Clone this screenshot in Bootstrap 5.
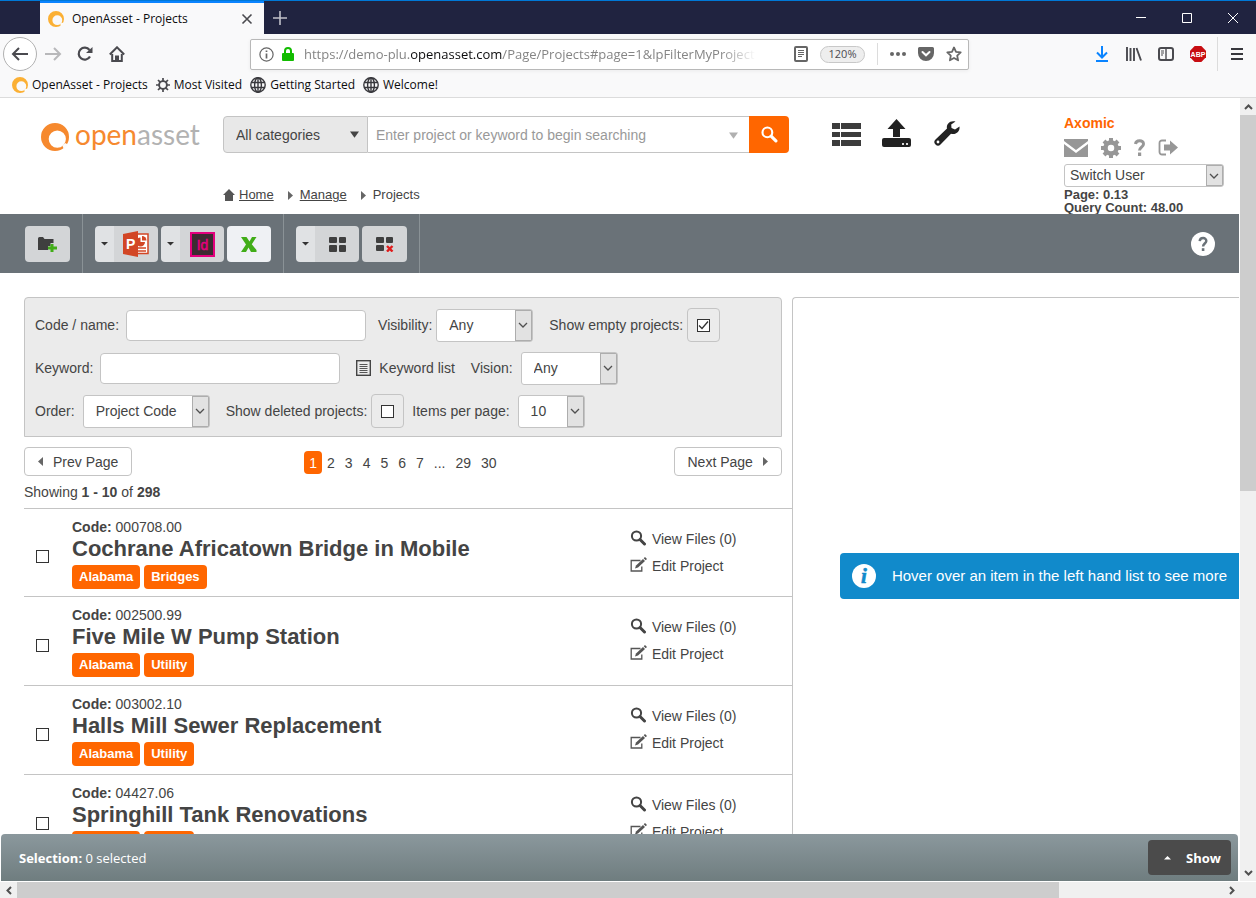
<!DOCTYPE html>
<html lang="en">
<head>
<meta charset="utf-8">
<meta name="viewport" content="width=device-width, initial-scale=1">
<title>OpenAsset - Projects</title>
<link rel="stylesheet" href="https://cdn.jsdelivr.net/npm/bootstrap@5.3.0/dist/css/bootstrap.min.css">
<style>
  :root { --line: #c4c4c4; --ink: #444; --brand: #ff6600; }
  body { font: 14px/18px "Liberation Sans", Arial, sans-serif; color: var(--ink); background: #fff; }
  svg { display: block; flex: none; }
  button { color: inherit; }
  .ui-font { font-family: "Open Sans", "Noto Sans", sans-serif; font-size: 12px; line-height: 16px; color: #0c0c0d; }
  .bare { border: 0; background: none; padding: 0; display: flex; align-items: center; justify-content: center; }

  /* browser window */
  .tabstrip { height: 34px; background: #202340; border-top: 1px solid #0078d7; padding-left: 40px; }
  .browser-tab { width: 224px; background: #f9f9fa; border-top: 2px solid #0a84ff; padding: 0 10px 0 8px; }
  .win-btn { width: 46px; }
  .navrow { height: 40px; background: #f9f9fa; padding: 0 3px; color: #4a4a4f; }
  .nav-ico { width: 32px; height: 32px; }
  .nav-back { border: 1px solid #b1b1b1; border-radius: 50%; width: 34px; height: 34px; background: #fff; }
  .urlbar { margin-left: 117px; width: 719px; height: 31px; border: 1px solid #b8b8b8; border-radius: 2px; background: #fff; padding: 0 6px 0 8px; box-shadow: 0 1px 4px rgba(0,0,0,.06); }
  .url-text { font-size: 13px; line-height: 20px; margin-left: 10px; max-width: 452px; color: #858585; white-space: nowrap; overflow: hidden; -webkit-mask-image: linear-gradient(to right, #000 92%, transparent); mask-image: linear-gradient(to right, #000 92%, transparent); }
  .url-text b { font-weight: 400; color: #0c0c0d; }
  .zoom-pill { border: 1px solid #c8c8c8; border-radius: 9px; background: #eee; width: 45px; height: 17px; font-size: 11px; line-height: 14px; text-align: center; padding: 0; margin: 0 12px; }
  .v-rule { width: 1px; height: 22px; background: #dcdcdc; }
  .v-rule-tall { height: 34px; margin: 0 3px; }
  .bookmarks { height: 24px; background: #f9f9fa; border-bottom: 1px solid #dcdcdc; padding: 0 12px 2px; }
  .bookmarks a { color: #0c0c0d; text-decoration: none; }

  /* scrollbars */
  .vbar { width: 16px; background: #f0f0f0; margin-left: 1px; }
  .hbar { height: 16px; background: #f0f0f0; margin-top: 1px; }
  .thumb { background: #cdcdcd; }
  .vbar .thumb { height: 48%; }
  .hbar .thumb { width: 83%; }
  .sb-btn { width: 17px; height: 17px; color: #505050; }

  /* site header */
  .site-head { height: 116px; padding: 17px 15px 0 41px; }
  .wordmark { font: 28px/30px Lato, sans-serif; color: #b2b2b2; text-decoration: none; width: 182px; gap: 6px; }
  .wordmark span { color: #f6892e; }
  .finder { height: 37px; margin-top: 1px; }
  .finder-cat { width: 145px; border: 1px solid var(--line); border-radius: 4px 0 0 4px; padding: 0 12px; color: var(--ink); appearance: none;
    background: #e8e8e8 url("data:image/svg+xml,%3Csvg xmlns='http://www.w3.org/2000/svg' viewBox='0 0 10 8'%3E%3Cpath d='M0 0h10L5 7z' fill='%23444'/%3E%3C/svg%3E") no-repeat right 8px top 14px / 9px 8px; }
  .finder-box { width: 381px; border: 1px solid var(--line); border-left: 0; border-right: 0; padding: 0 8px; color: var(--ink);
    background: #fff url("data:image/svg+xml,%3Csvg xmlns='http://www.w3.org/2000/svg' viewBox='0 0 10 8'%3E%3Cpath d='M0 0h10L5 7z' fill='%23b0b0b0'/%3E%3C/svg%3E") no-repeat right 11px top 15px / 9px 8px; }
  .finder-box::placeholder { color: #999; }
  .finder-go { width: 40px; background: var(--brand); border-radius: 0 4px 4px 0; }
  .crumbs { margin-top: 33px; font-size: 13px; }
  .crumbs a { color: var(--ink); }
  .crumb-sep { margin: 0 7px 0 14px; }
  .main-icons { margin: 4px 0 0 43px; gap: 21px; }
  .who { width: 160px; font-weight: 700; font-size: 13px; line-height: 13px; }
  .who-name { color: var(--brand); text-decoration: none; font-size: 14px; line-height: 16px; }
  .who-icons { height: 33px; gap: 13px; }

  /* native looking drop-downs */
  .pick { appearance: none; height: 33px; border: 1px solid var(--line); border-radius: 3px; color: var(--ink); padding: 0 0 0 12px;
    background: url("data:image/svg+xml,%3Csvg xmlns='http://www.w3.org/2000/svg' viewBox='0 0 10 6'%3E%3Cpath d='M1 1l4 4 4-4' fill='none' stroke='%23505050' stroke-width='1.3'/%3E%3C/svg%3E") no-repeat right 4px center / 10px 6px,
      linear-gradient(#e2e2e2, #e2e2e2) no-repeat right 1px center / 15px calc(100% - 2px),
      linear-gradient(#adadad, #adadad) no-repeat right 0 center / 17px 100%, #fff; }
  .pick-sm { height: 23px; padding-left: 5px; width: 160px; font-size: 14px; font-weight: 400; margin-bottom: 1px; }

  /* grey action bar */
  .actionbar { height: 59px; background: #6a7278; padding: 0 24px 0 25px; }
  .group { padding: 12px 12px 0; border-right: 1px solid #8a9296; gap: 3px; }
  .group:first-child { padding-left: 0; }
  .tool { height: 36px; width: 45px; border-radius: 4px; background: #d3d5d7; }
  .tool-menu { width: 19px; background: #e0e2e4; border-radius: 4px 0 0 4px; }
  .tool-menu + .tool { border-radius: 0 4px 4px 0; width: 44px; }
  .tool-lit { width: 44px; background: #eff1f4; }

  /* filters */
  .workspace { padding-left: 24px; padding-top: 24px; }
  .left-col { flex: 0 0 63.2%; }
  .filters { background: #ebebeb; border: 1px solid var(--line); border-radius: 4px 4px 0 0; padding: 10px 10px 8px; margin-right: 10px; }
  .filter-row { height: 34px; display: flex; align-items: center; }
  .filter-row + .filter-row { margin-top: 9px; }
  .entry { width: 240px; height: 31px; border: 1px solid var(--line); border-radius: 4px; background: #fff; margin-left: 7px; }
  .boxed { border: 1px solid var(--line); border-radius: 4px; height: 34px; width: 33px; display: flex; align-items: center; justify-content: center; }
  .tick { appearance: none; width: 13px; height: 13px; border: 1px solid #333; background: #fff; margin: 0; flex: none; }
  .tick:checked { background: #fff url("data:image/svg+xml,%3Csvg xmlns='http://www.w3.org/2000/svg' viewBox='0 0 11 11'%3E%3Cpath d='M1 5.5l3 3 6-7' fill='none' stroke='%23333' stroke-width='1.3'/%3E%3C/svg%3E"); }
  .w-any { width: 97px; }
  .w-order { width: 127px; }
  .w-items { width: 67px; }

  /* pager and results */
  .pager-row { margin: 10px 10px 0 0; }
  .page-btn { height: 29px; border: 1px solid var(--line); border-radius: 4px; background: #fff; padding: 0 13px; display: flex; align-items: center; gap: 10px; }
  .pages { padding-top: 2px; }
  .pages a { color: var(--ink); text-decoration: none; padding: 3px 5px 2px; line-height: 18px; border-radius: 4px; }
  .pages a.now { background: var(--brand); color: #fff; }
  .tally { margin: 7px 0; }
  .result { height: 89px; border-bottom: 1px solid var(--line); }
  .result:first-child { border-top: 1px solid var(--line); }
  .result-pick { width: 48px; padding: 8px 0 0 12px; }
  .result-text { padding-top: 9px; }
  .result-title { font-size: 22px; line-height: 26px; font-weight: 700; margin: 0 0 3px; }
  .tagbox { background: var(--brand); color: #fff; font-weight: 700; font-size: 13px; line-height: 24px; padding: 0 7px; border-radius: 4px; text-decoration: none; }
  .acts { width: 162px; padding-top: 21px; gap: 9px; }
  .acts a { color: var(--ink); text-decoration: none; display: flex; gap: 5px; }
  .preview { border-left: 1px solid var(--line); border-top: 1px solid var(--line); border-top-left-radius: 4px; padding: 255px 0 0 47px; overflow: hidden; }
  .hint { background: #118acb; color: #fff; border-radius: 4px 0 0 4px; height: 46px; font-size: 15px; padding-left: 12px; gap: 16px; white-space: nowrap; }

  /* selection drawer */
  .drawer { height: 47px; margin: 0 1px; border-radius: 4px 4px 0 0; background: linear-gradient(#8b989d, #6f7d7f); font-size: 13px; padding: 0 7px 0 18px; }
  .show-btn { background: #4b4b4b; border-radius: 4px; width: 83px; height: 35px; padding-left: 6px; font-weight: 700; color: #fff; gap: 15px; }
</style>
</head>
<body>
<svg width="0" height="0" class="position-absolute">
  <symbol id="ring" viewBox="0 0 28 28"><path fill-rule="evenodd" d="M14 0a14 14 0 1 0 0 28 14 14 0 0 0 0-28zM16.300 7.500a8.600 8.600 0 1 1 0 17.200 8.600 8.600 0 0 1 0-17.200z"/><path d="M21.500 23l1.500 3.500 4-5-3-1.500z" fill="#fcfcfc"/></symbol>
  <symbol id="globe" viewBox="0 0 16 16"><g fill="none" stroke="#38383d" stroke-width="1.400"><circle cx="8" cy="8" r="7.200"/><ellipse cx="8" cy="8" rx="3.400" ry="7.200"/><path d="M1 5.500h14M1 10.500h14M8 1v14"/></g></symbol>
  <symbol id="lens" viewBox="0 0 16 16"><circle cx="6" cy="6" r="4.600" fill="none" stroke="currentColor" stroke-width="2"/><path d="M9.500 9.500l4.500 4.500" stroke="currentColor" stroke-width="3" stroke-linecap="round"/></symbol>
  <symbol id="pen" viewBox="0 0 17 16"><path d="M10.500 3.500H1.200v10.500h10.600V9.500" fill="none" stroke="#555" stroke-width="1.300"/><path d="M5 11.500l1-3L13 2l2 2-7 6.500z" fill="#555"/><path d="M13.700 1.300L15 0l2 2-1.300 1.300z" fill="#555"/></symbol>
  <symbol id="caret" viewBox="0 0 7 4"><path d="M0 0h7L3.500 3.500z" fill="#333"/></symbol>
  <symbol id="tri" viewBox="0 0 5 9"><path d="M0 0l5 4.500L0 9z" fill="#666"/></symbol>
</svg>

<div class="vh-100 d-flex flex-column overflow-hidden">

  <!-- browser chrome -->
  <div class="tabstrip ui-font d-flex flex-shrink-0">
    <div class="browser-tab d-flex align-items-center">
      <svg width="16" height="16" fill="#fbb034"><use href="#ring"/></svg>
      <span class="ms-2 flex-fill">OpenAsset - Projects</span>
      <button class="bare" aria-label="Close tab"><svg width="14" height="14" viewBox="0 0 14 14"><path d="M2.500 2.500l9 9m0-9l-9 9" stroke="#4a4a4f" stroke-width="1.600"/></svg></button>
    </div>
    <button class="bare ms-2" aria-label="New tab"><svg width="16" height="16" viewBox="0 0 16 16"><path d="M8 1v14M1 8h14" stroke="#c0c0c8" stroke-width="1.600"/></svg></button>
    <div class="ms-auto d-flex">
      <button class="bare win-btn" aria-label="Minimize"><svg width="10" height="10" viewBox="0 0 10 10"><path d="M0 4.500h10" stroke="#fff"/></svg></button>
      <button class="bare win-btn" aria-label="Maximize"><svg width="10" height="10" viewBox="0 0 10 10"><path d="M.5.5h9v9h-9z" fill="none" stroke="#fff"/></svg></button>
      <button class="bare win-btn" aria-label="Close"><svg width="10" height="10" viewBox="0 0 10 10"><path d="M0 0l10 10M10 0L0 10" stroke="#fff"/></svg></button>
    </div>
  </div>

  <div class="navrow ui-font d-flex align-items-center flex-shrink-0">
    <button class="bare nav-back" aria-label="Back"><svg width="18" height="16" viewBox="0 0 18 16"><path d="M8 2L2 8l6 6M2 8h15" fill="none" stroke="#4a4a4f" stroke-width="2"/></svg></button>
    <button class="bare nav-ico" aria-label="Forward"><svg width="18" height="16" viewBox="0 0 18 16"><path d="M10 2l6 6-6 6M16 8H1" fill="none" stroke="#b8b8ba" stroke-width="2"/></svg></button>
    <button class="bare nav-ico" aria-label="Reload"><svg width="16" height="16" viewBox="0 0 16 16"><path d="M13 10.500A6 6 0 1 1 12.500 4" fill="none" stroke="#4a4a4f" stroke-width="2.200"/><path d="M15.500 1v6H9z" fill="#4a4a4f"/></svg></button>
    <button class="bare nav-ico" aria-label="Home"><svg width="16" height="16" viewBox="0 0 16 16"><path d="M.8 8.500L8 1.300l7.200 7.200" fill="none" stroke="#4a4a4f" stroke-width="2"/><path d="M3.200 8v7h9.600V8" fill="none" stroke="#4a4a4f" stroke-width="2"/><path d="M6 15V9.500h4V15z" fill="#4a4a4f"/></svg></button>
    <div class="urlbar d-flex align-items-center">
      <svg width="15" height="15" viewBox="0 0 15 15"><circle cx="7.500" cy="7.500" r="6.600" fill="none" stroke="#666" stroke-width="1.200"/><path d="M7.500 6.500v5M7.500 3.500v1.600" stroke="#666" stroke-width="1.700"/></svg>
      <svg class="ms-2" width="12" height="14" viewBox="0 0 12 14"><path d="M3 7V4a3 3 0 0 1 6 0v3" fill="none" stroke="#12bc00" stroke-width="2"/><rect y="6" width="12" height="8" rx="1" fill="#12bc00"/></svg>
      <div class="url-text flex-fill" role="textbox" contenteditable="true" aria-label="Address">https://demo-plu.<b>openasset.com</b>/Page/Projects#page=1&amp;lpFilterMyProject</div>
      <button class="bare ms-auto" aria-label="Reader view"><svg width="14" height="16" viewBox="0 0 14 16"><rect x="1" y="1" width="12" height="14" rx="1" fill="none" stroke="#666" stroke-width="2"/><path d="M4 4.500h6M4 6.500h6M4 8.500h6M4 10.500h4" stroke="#666"/></svg></button>
      <button class="zoom-pill">120%</button>
      <span class="v-rule me-2"></span>
      <button class="bare px-1" aria-label="Page actions"><svg width="16" height="4" viewBox="0 0 16 4"><g fill="#666"><circle cx="2" cy="2" r="2"/><circle cx="8" cy="2" r="2"/><circle cx="14" cy="2" r="2"/></g></svg></button>
      <button class="bare ms-2" aria-label="Pocket"><svg width="16" height="14" viewBox="0 0 16 14"><path d="M1.500 0h13A1.500 1.500 0 0 1 16 1.500V6A8 8 0 0 1 0 6V1.500A1.500 1.500 0 0 1 1.500 0z" fill="#666"/><path d="M4.500 5L8 8.300 11.500 5" fill="none" stroke="#fff" stroke-width="2" stroke-linecap="round"/></svg></button>
      <button class="bare ms-2 ps-1" aria-label="Bookmark"><svg width="16" height="16" viewBox="0 0 16 16"><path d="M8 1.500l2 4.300 4.700.6-3.500 3.200.9 4.700L8 12l-4.100 2.300.9-4.700L1.300 6.400 6 5.800z" fill="none" stroke="#666" stroke-width="1.800" stroke-linejoin="round"/></svg></button>
    </div>
    <div class="ms-auto d-flex align-items-center">
      <button class="bare nav-ico" aria-label="Downloads"><svg width="12" height="16" viewBox="0 0 12 16"><path d="M6 0v11M1 6.500l5 5 5-5M0 15h12" fill="none" stroke="#0a84ff" stroke-width="2"/></svg></button>
      <button class="bare nav-ico" aria-label="Library"><svg width="16" height="14" viewBox="0 0 16 14"><path d="M1 0v14M4.500 1v13M8 1v13M10.500 1L15 13.500" stroke="#4a4a4f" stroke-width="1.900"/></svg></button>
      <button class="bare nav-ico" aria-label="Sidebars"><svg width="16" height="14" viewBox="0 0 16 14"><rect x="1" y="1" width="14" height="12" rx="2" fill="none" stroke="#4a4a4f" stroke-width="2"/><path d="M8 1v12" stroke="#4a4a4f" stroke-width="1.400"/><path d="M3 4h3M3 6h3M3 8h2" stroke="#4a4a4f"/></svg></button>
      <button class="bare nav-ico" aria-label="Adblock Plus"><svg width="16" height="16" viewBox="0 0 16 16"><path d="M4.700 0h6.600L16 4.700v6.600L11.300 16H4.700L0 11.300V4.700z" fill="#c70d12"/><text x="8" y="10.500" font-family="Liberation Sans" font-size="7" font-weight="700" fill="#fff" text-anchor="middle">ABP</text></svg></button>
      <span class="v-rule v-rule-tall"></span>
      <button class="bare nav-ico" aria-label="Menu"><svg width="12" height="14" viewBox="0 0 12 14"><path d="M0 2h12M0 7h12M0 12h12" stroke="#38383d" stroke-width="1.800"/></svg></button>
    </div>
  </div>

  <div class="bookmarks ui-font d-flex align-items-center gap-2 flex-shrink-0">
    <a href="#" class="d-flex gap-1"><svg width="16" height="16" fill="#fbb034"><use href="#ring"/></svg>OpenAsset - Projects</a>
    <a href="#" class="d-flex gap-1"><svg width="14" height="16" viewBox="0 0 14 16"><circle cx="7" cy="8" r="3.900" fill="none" stroke="#4a4a4f" stroke-width="1.900"/><path d="M7 1v3M7 12v3M0 8h3M11 8h3M2 3l2.200 2.200M9.800 10.800L12 13M12 3L9.800 5.200M4.200 10.800L2 13" stroke="#4a4a4f" stroke-width="1.700"/></svg>Most Visited</a>
    <a href="#" class="d-flex gap-1"><svg width="16" height="16"><use href="#globe"/></svg>Getting Started</a>
    <a href="#" class="d-flex gap-1"><svg width="16" height="16"><use href="#globe"/></svg>Welcome!</a>
  </div>

  <!-- page and vertical scrollbar -->
  <div class="d-flex flex-fill overflow-hidden">
    <div class="flex-fill d-flex flex-column overflow-hidden">
      <div class="flex-fill overflow-hidden d-flex flex-column">

        <header class="site-head d-flex flex-shrink-0">
          <a href="#" class="wordmark d-flex mt-1"><svg width="28" height="28" fill="#f6892e" class="mt-1"><use href="#ring"/></svg><div><span>open</span>asset</div></a>
          <div>
            <form class="finder d-flex" onsubmit="return false">
              <select class="finder-cat" aria-label="Category"><option>All categories</option></select>
              <input class="finder-box" type="text" aria-label="Search" placeholder="Enter project or keyword to begin searching">
              <button class="finder-go bare text-white" aria-label="Search"><svg width="17" height="17"><use href="#lens"/></svg></button>
            </form>
            <nav class="crumbs d-flex align-items-center">
              <svg class="me-1" width="12" height="12" viewBox="0 0 12 12"><path d="M6 0l6 6h-2v6H2V6H0z" fill="#555"/></svg>
              <a href="#">Home</a>
              <svg class="crumb-sep" width="5" height="9"><use href="#tri"/></svg>
              <a href="#">Manage</a>
              <svg class="crumb-sep" width="5" height="9"><use href="#tri"/></svg>
              <span>Projects</span>
            </nav>
          </div>
          <div class="main-icons d-flex align-items-start">
            <button class="bare mt-1" aria-label="List"><svg width="29" height="23" viewBox="0 0 29 23"><path d="M0 0h8v6H0zM9 0h20v6H9zM0 9h8v5H0zM9 9h20v5H9zM0 17h8v6H0zM9 17h20v6H9z" fill="#3c3c3c"/></svg></button>
            <button class="bare" aria-label="Upload"><svg width="29" height="28" viewBox="0 0 29 28"><path d="M14.500 0l9 10h-5.500v8h-7v-8H5.500z" fill="#222"/><path d="M2 19h25a2 2 0 0 1 2 2v5a2 2 0 0 1-2 2H2a2 2 0 0 1-2-2v-5a2 2 0 0 1 2-2z" fill="#222"/><path d="M20 24h2v2h-2zM24 24h2v2h-2z" fill="#ddd"/></svg></button>
            <button class="bare" aria-label="Settings"><svg width="29" height="28" viewBox="-2 -2 29 28"><path d="M25.500 5.500l-4.500 3-3.500-1.500-.3-3.500L21.500.6c-5-1.600-9.500 2.200-8.500 7L1.500 18.500a3.400 3.400 0 0 0 5 5L17 12.800c4.800 1.200 9.300-2.300 8.500-7.300z" fill="#222"/><circle cx="4" cy="21" r="1.400" fill="#fff"/></svg></button>
          </div>
          <div class="who ms-auto">
            <a href="#" class="who-name d-block">Axomic</a>
            <div class="who-icons d-flex align-items-center">
              <svg width="24" height="18" viewBox="0 0 24 18"><path d="M0 0h24v2l-12 9L0 2zM0 5l12 9 12-9v13H0z" fill="#979797"/></svg>
              <svg width="20" height="20" viewBox="0 0 20 20"><circle cx="10" cy="10" r="5.500" fill="none" stroke="#979797" stroke-width="4.500"/><path d="M10 0v4M10 16v4M0 10h4M16 10h4M3 3l3 3M14 14l3 3M17 3l-3 3M6 14l-3 3" stroke="#979797" stroke-width="4"/></svg>
              <svg width="11" height="17" viewBox="0 0 11 17"><path d="M1.500 5C2 1 9.500.500 9.500 5c0 3-4 3.300-4 6.500" fill="none" stroke="#979797" stroke-width="3"/><path d="M4 13.500h3.200V17H4z" fill="#979797"/></svg>
              <svg width="20" height="17" viewBox="0 0 20 17"><path d="M8 1.500H4a2.500 2.500 0 0 0-2.500 2.500v9A2.500 2.500 0 0 0 4 15.500h4" fill="none" stroke="#979797" stroke-width="1.800"/><path d="M6 5.500h6v-4l8 7-8 7v-4H6z" fill="#979797"/></svg>
            </div>
            <select class="pick pick-sm d-block" aria-label="Switch User"><option>Switch User</option></select>
            <div>Page: 0.13</div><div>Query Count: 48.00</div>
          </div>
        </header>

        <div class="actionbar d-flex flex-shrink-0">
          <div class="group d-flex">
            <button class="bare tool" aria-label="New project"><svg width="20" height="15" viewBox="0 0 20 15"><path d="M0 1.500Q0 0 1.500 0H5l1.500 2h9v4h-3v3H10v4H0z" fill="#3f3f3f"/><path d="M12.500 7h3v2.500H19v3h-3.500V15h-3v-2.500H10v-3h2.500z" fill="#41ad18"/></svg></button>
          </div>
          <div class="group d-flex">
            <div class="d-flex"><button class="bare tool tool-menu" aria-label="PowerPoint options"><svg width="7" height="4"><use href="#caret"/></svg></button>
              <button class="bare tool" aria-label="PowerPoint"><svg width="26" height="26" viewBox="0 0 26 26"><path d="M13 3h12v19.500H13z" fill="#fff" stroke="#d24625" stroke-width="1.500"/><path d="M17.500 6.500V11H22a4.500 4.500 0 1 1-4.500-4.500z" fill="#d24625"/><path d="M19 5a4.500 4.500 0 0 1 4.500 4.500H19z" fill="#d24625"/><path d="M15 17h8M15 20h8" stroke="#d24625" stroke-width="1.500"/><path d="M0 3l15-3v26L0 23z" fill="#d24625"/><text x="3" y="18" font-family="Liberation Sans" font-size="14" font-weight="700" fill="#fff">P</text></svg></button></div>
            <div class="d-flex"><button class="bare tool tool-menu" aria-label="InDesign options"><svg width="7" height="4"><use href="#caret"/></svg></button>
              <button class="bare tool" aria-label="InDesign"><svg width="25" height="25" viewBox="0 0 25 25"><rect x="1" y="1" width="23" height="23" fill="#3c2b31" stroke="#e3007d" stroke-width="2"/><text x="12.500" y="17.500" font-family="Liberation Sans" font-size="14" fill="#e3007d" stroke="#e3007d" stroke-width=".5" text-anchor="middle">Id</text></svg></button></div>
            <button class="bare tool tool-lit" aria-label="Excel"><svg width="16" height="15" viewBox="0 0 16 15"><path d="M0 0h5.500l3 4.500L11 0h4.500l-4.700 7.200L15.500 13V15H10L7.500 10.500 5 15H0l5-7.500z" fill="#41ad18"/></svg></button>
          </div>
          <div class="group d-flex">
            <div class="d-flex"><button class="bare tool tool-menu" aria-label="Grid options"><svg width="7" height="4"><use href="#caret"/></svg></button>
              <button class="bare tool" aria-label="Select all"><svg width="17" height="15" viewBox="0 0 17 15"><g fill="#3f3f3f"><rect width="8" height="6" rx="1"/><rect x="10" width="7" height="6" rx="1"/><rect y="8" width="8" height="7" rx="1"/><rect x="10" y="8" width="7" height="7" rx="1"/></g></svg></button></div>
            <button class="bare tool" aria-label="Clear selection"><svg width="18" height="15" viewBox="0 0 18 15"><g fill="#3f3f3f"><rect width="8" height="6" rx="1"/><rect x="10" width="7" height="6" rx="1"/><rect y="8" width="8" height="6" rx="1"/></g><path d="M11 9l5.500 5.500M16.500 9L11 14.500" stroke="#e01b1b" stroke-width="2.400"/></svg></button>
          </div>
          <button class="bare ms-auto" aria-label="Help"><svg width="24" height="24" viewBox="0 0 24 24"><circle cx="12" cy="12" r="12" fill="#fff"/><path d="M8.700 9.200C9 5 15.500 5.200 15.300 9c-.2 2.500-3.200 2.700-3.200 5.500" fill="none" stroke="#6a7278" stroke-width="2.500"/><path d="M10.800 16.200h2.600v2.800h-2.600z" fill="#6a7278"/></svg></button>
        </div>

        <main class="workspace d-flex flex-fill overflow-hidden">
          <section class="left-col">
            <form class="filters" onsubmit="return false">
              <div class="filter-row">
                <label for="f-code">Code / name:</label><input id="f-code" class="entry" type="text">
                <label for="f-vis" class="ms-2 ps-1">Visibility:</label><select id="f-vis" class="pick w-any ms-1"><option>Any</option></select>
                <label for="f-empty" class="ms-3">Show empty projects:</label><span class="boxed ms-1"><input id="f-empty" class="tick" type="checkbox" checked></span>
              </div>
              <div class="filter-row">
                <label for="f-key">Keyword:</label><input id="f-key" class="entry" type="text">
                <button class="bare ms-3" type="button"><svg class="me-2" width="15" height="16" viewBox="0 0 15 16"><rect x=".7" y=".7" width="13.600" height="14.600" fill="#ebebeb" stroke="#444" stroke-width="1.400"/><path d="M3.500 4.500h8M3.500 6.500h8M3.500 8.500h8M3.500 10.500h8M3.500 12.500h8" stroke="#555"/></svg>Keyword list</button>
                <label for="f-vision" class="ms-3">Vision:</label><select id="f-vision" class="pick w-any ms-2"><option>Any</option></select>
              </div>
              <div class="filter-row">
                <label for="f-order">Order:</label><select id="f-order" class="pick w-order ms-2"><option>Project Code</option></select>
                <label for="f-del" class="ms-3">Show deleted projects:</label><span class="boxed ms-1"><input id="f-del" class="tick" type="checkbox"></span>
                <label for="f-items" class="ms-2">Items per page:</label><select id="f-items" class="pick w-items ms-2"><option>10</option></select>
              </div>
            </form>

            <div class="pager-row d-flex justify-content-between align-items-center">
              <button class="page-btn"><svg width="5" height="9" viewBox="0 0 5 9"><path d="M5 0L0 4.500 5 9z" fill="#666"/></svg>Prev Page</button>
              <nav class="pages d-flex"><a href="#" class="now">1</a><a href="#">2</a><a href="#">3</a><a href="#">4</a><a href="#">5</a><a href="#">6</a><a href="#">7</a><a href="#">...</a><a href="#">29</a><a href="#">30</a></nav>
              <button class="page-btn">Next Page<svg width="5" height="9"><use href="#tri"/></svg></button>
            </div>
            <div class="tally">Showing <b>1 - 10</b> of <b>298</b></div>

            <div id="results"></div>
          </section>

          <aside class="preview flex-fill">
            <div class="hint d-flex align-items-center"><svg width="24" height="24" viewBox="0 0 24 24"><circle cx="12" cy="12" r="12" fill="#fff"/><text x="12" y="19" font-family="Liberation Serif" font-size="21" font-weight="700" font-style="italic" fill="#118acb" stroke="#118acb" stroke-width=".6" text-anchor="middle">i</text></svg><span>Hover over an item in the left hand list to see more</span></div>
          </aside>
        </main>
      </div>

      <div class="drawer ui-font d-flex align-items-center text-white flex-shrink-0">
        <span><b>Selection:</b> 0 selected</span>
        <button class="bare show-btn ms-auto"><svg width="7" height="4" viewBox="0 0 7 4"><path d="M0 3.500h7L3.500 0z" fill="#fff"/></svg>Show</button>
      </div>
    </div>

    <div class="vbar d-flex flex-column flex-shrink-0">
      <div class="sb-btn bare"><svg width="9" height="6" viewBox="0 0 9 6"><path d="M1 5l3.500-3.500L8 5" fill="none" stroke="currentColor" stroke-width="2"/></svg></div>
      <div class="thumb"></div>
      <div class="sb-btn bare mt-auto"><svg width="9" height="6" viewBox="0 0 9 6"><path d="M1 1l3.500 3.500L8 1" fill="none" stroke="currentColor" stroke-width="2"/></svg></div>
    </div>
  </div>

  <div class="hbar d-flex flex-shrink-0">
    <div class="sb-btn bare"><svg width="6" height="9" viewBox="0 0 6 9"><path d="M5 1L1.500 4.500 5 8" fill="none" stroke="currentColor" stroke-width="2"/></svg></div>
    <div class="thumb"></div>
    <div class="sb-btn bare ms-auto me-3"><svg width="6" height="9" viewBox="0 0 6 9"><path d="M1 1l3.500 3.500L1 8" fill="none" stroke="currentColor" stroke-width="2"/></svg></div>
  </div>
</div>

<script>
  const projects = [
    ['000708.00', 'Cochrane Africatown Bridge in Mobile', 'Bridges'],
    ['002500.99', 'Five Mile W Pump Station', 'Utility'],
    ['003002.10', 'Halls Mill Sewer Replacement', 'Utility'],
    ['04427.06', 'Springhill Tank Renovations', 'Utility']
  ];
  document.getElementById('results').innerHTML = projects.map(([code, title, tag]) => `
    <article class="result d-flex">
      <div class="result-pick d-flex align-items-center"><input class="tick" type="checkbox" aria-label="Select ${title}"></div>
      <div class="result-text flex-fill">
        <div><b>Code:</b> ${code}</div>
        <h2 class="result-title">${title}</h2>
        <div class="d-flex gap-1"><a href="#" class="tagbox">Alabama</a><a href="#" class="tagbox">${tag}</a></div>
      </div>
      <div class="acts d-flex flex-column">
        <a href="#"><svg width="17" height="16"><use href="#lens"/></svg>View Files (0)</a>
        <a href="#"><svg width="17" height="16"><use href="#pen"/></svg>Edit Project</a>
      </div>
    </article>`).join('');
</script>
<script src="https://cdn.jsdelivr.net/npm/bootstrap@5.3.0/dist/js/bootstrap.bundle.min.js"></script>
</body>
</html>
